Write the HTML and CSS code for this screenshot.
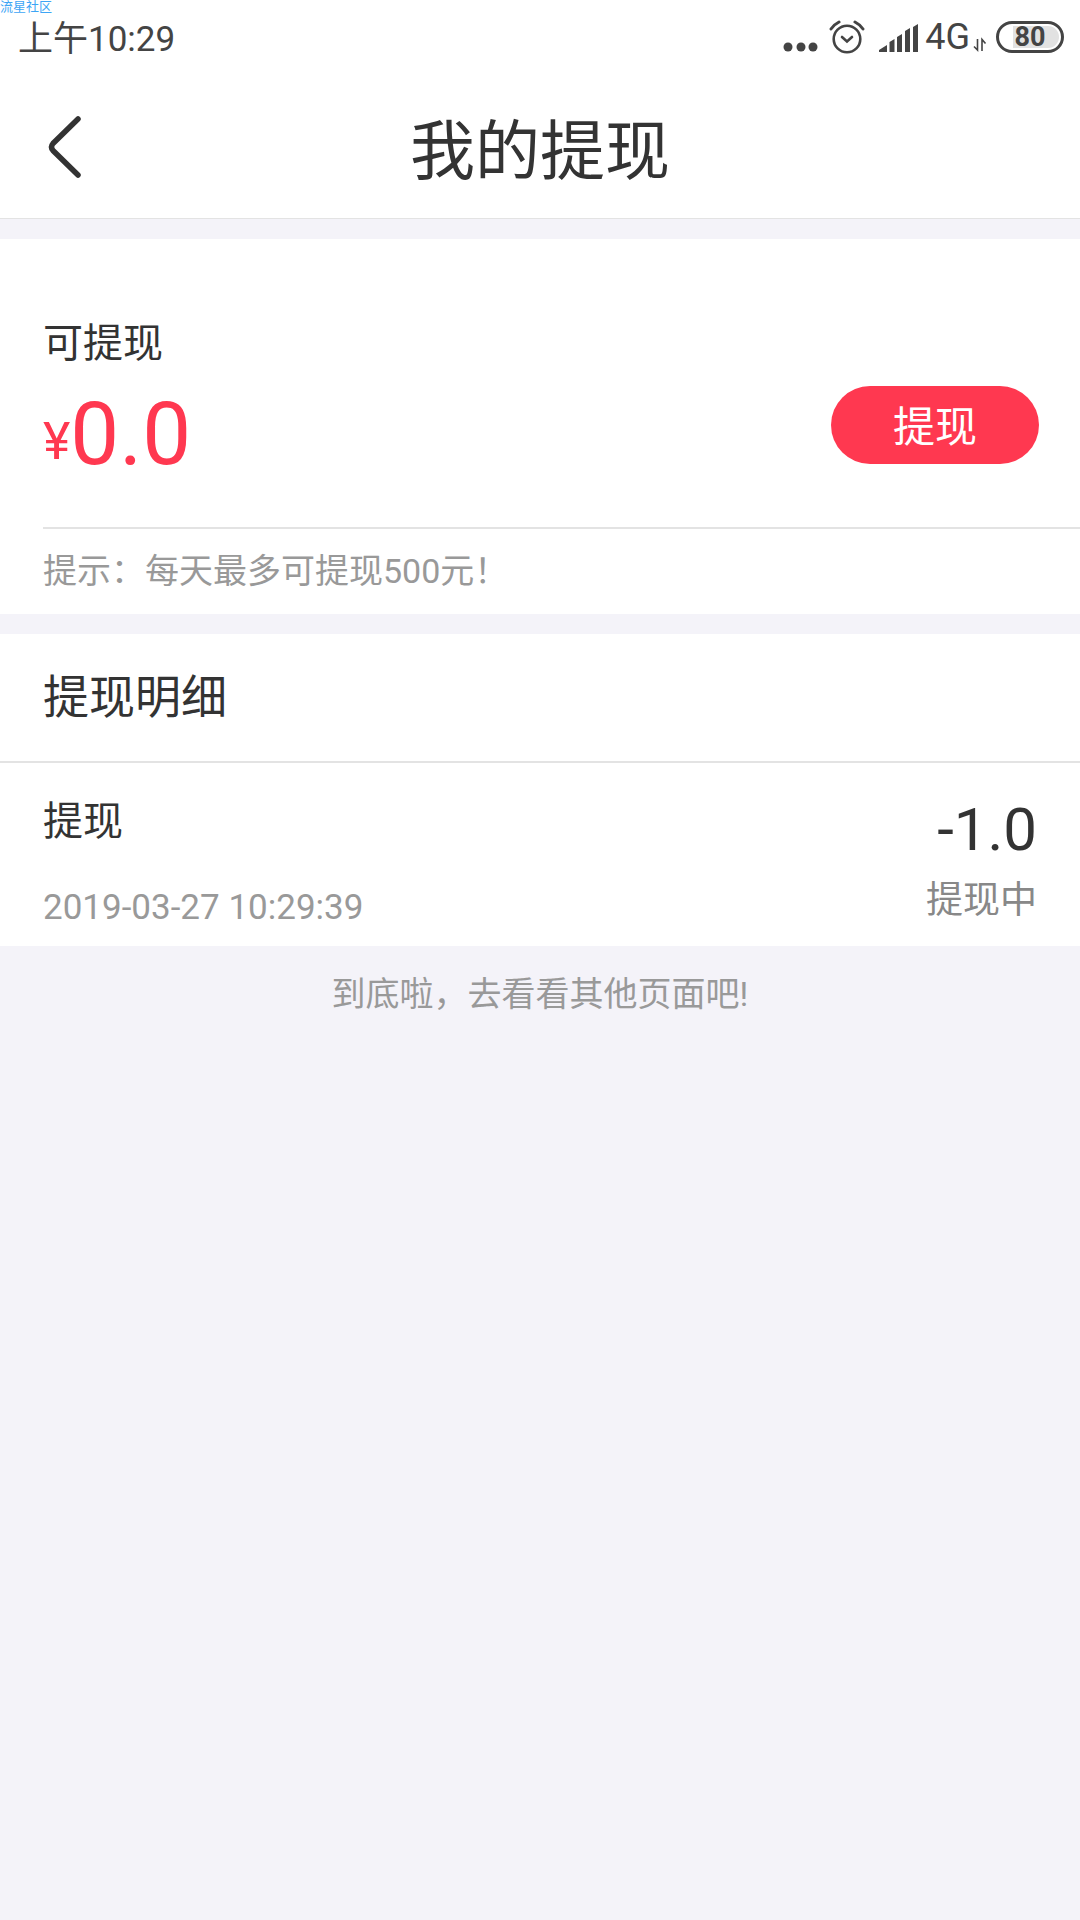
FILE: index.html
```html
<!DOCTYPE html>
<html lang="zh-CN">
<head>
    <meta charset="UTF-8">
    <meta name="viewport" content="width=device-width, initial-scale=1.0">
    <title>我的提现</title>
    <link rel="stylesheet" href="styles.css">
</head>
<body>

    <div class="watermark">流星社区</div>

    <!-- 状态栏 -->
    <div class="status-bar">
        <span class="status-time">上午10:29</span>
        <div class="status-icons">
            <svg class="icon-more" width="36" height="34" viewBox="0 0 36 34" fill="#444">
                <circle cx="5" cy="27" r="4.5"/>
                <circle cx="18" cy="27" r="4.5"/>
                <circle cx="30" cy="27" r="4.5"/>
            </svg>
            <svg class="icon-alarm" width="36" height="34" viewBox="0 0 36 34" fill="none" stroke="#444" stroke-width="2.6" stroke-linecap="round">
                <circle cx="18" cy="19" r="13.3"/>
                <path d="M13 17l5 4.5 5-4.5"/>
                <path d="M2 9q3-4.5 8-7M34 9q-3-4.5-8-7" stroke-width="3"/>
            </svg>
            <svg class="icon-signal" width="40" height="34" viewBox="0 0 40 34" fill="#444">
                <path d="M0 32v-2l8-5v7zM10.500 32V22l5-3v13zM18 32V17l5-3v18zM26 32V11l5-3v24zM34 32V7l5-3v28z"/>
            </svg>
            <span class="status-net">4G</span>
            <svg class="icon-data" width="14" height="34" viewBox="0 0 14 34" fill="none" stroke="#444" stroke-width="1.6">
                <path d="M4.500 19v11L1 26.500M9 31V19.500l3.500 4"/>
            </svg>
            <div class="battery"><span class="battery-level">80</span></div>
        </div>
    </div>

    <!-- 标题栏 -->
    <header class="header">
        <button class="back" type="button" aria-label="返回">
            <svg width="34" height="64" viewBox="0 0 34 64" fill="none" stroke="#333" stroke-width="5.5" stroke-linecap="round">
                <path d="M30 4L5 28.500Q2 32 5 35.500L30 60"/>
            </svg>
        </button>
        <h1 class="title">我的提现</h1>
    </header>

    <main>
        <!-- 余额 -->
        <section class="card">
            <div class="balance">
                <div class="balance-label">可提现</div>
                <div class="balance-row">
                    <div class="amount"><span class="currency">¥</span><span class="number">0.0</span></div>
                    <button class="withdraw" type="button">提现</button>
                </div>
            </div>
            <p class="hint">提示：每天最多可提现500元！</p>
        </section>

        <!-- 明细 -->
        <section class="card">
            <h2 class="card-title">提现明细</h2>
            <div class="record">
                <div class="record-info">
                    <span class="record-name">提现</span>
                    <time class="record-time" datetime="2019-03-27T10:29:39">2019-03-27 10:29:39</time>
                </div>
                <div class="record-result">
                    <span class="record-amount">-1.0</span>
                    <span class="record-state">提现中</span>
                </div>
            </div>
        </section>

        <p class="end">到底啦，去看看其他页面吧!</p>
    </main>

</body>
</html>
```
FILE: styles.css
```css
* {
    box-sizing: border-box;
}

body {
    margin: 0;
    min-height: 100vh;
    background-color: #f4f3f9;
    color: #333;
    font-family: Roboto, "Noto Sans CJK SC", sans-serif;
}

h1, h2, p {
    margin: 0;
    font-weight: normal;
}

button {
    border: none;
    padding: 0;
    font-family: inherit;
    cursor: pointer;
}

svg {
    display: block;
    flex: none;
}

/* 左上角水印 */
.watermark {
    position: absolute;
    top: 0;
    left: 0;
    font-size: 13px;
    line-height: 13px;
    color: #3da5f5;
}

/* 状态栏 */
.status-bar {
    display: flex;
    justify-content: space-between;
    align-items: flex-start;
    height: 76px;
    padding: 0 16px 0 18px;
    background-color: #fff;
    color: #444;
}

.status-time {
    font-size: 35px;
    line-height: 80px;
}

.status-icons {
    display: flex;
    align-items: center;
    height: 34px;
    margin-top: 20px;
}

.icon-alarm {
    margin-left: 10px;
}

.icon-signal {
    margin-left: 14px;
}

.status-net {
    margin-left: 6px;
    font-size: 36px;
    line-height: 34px;
}

.icon-data {
    margin: 0 9px 0 3px;
}

/* 电池 */
.battery {
    display: flex;
    width: 68px;
    height: 32px;
    padding: 2px;
    border: 3px solid #444;
    border-radius: 16px;
}

.battery-level {
    flex: 1;
    border-radius: 11px;
    background: linear-gradient(to right, #fff 20%, #e2e2e2 20%);
    font-size: 27px;
    font-weight: bold;
    line-height: 22px;
    text-align: center;
}

/* 标题栏 */
.header {
    display: grid;
    grid-template-columns: 120px 1fr 120px;
    align-items: center;
    height: 143px;
    border-bottom: 1px solid #e3e3e3;
    background-color: #fff;
}

.back {
    padding-left: 48px;
    background: none;
}

.title {
    padding-top: 10px;
    font-size: 65px;
    line-height: 96px;
    text-align: center;
}

/* 白色区块 */
.card {
    margin-top: 20px;
    background-color: #fff;
}

.balance {
    margin-left: 43px;
    padding: 75px 41px 43px 0;
    border-bottom: 2px solid #e3e3e3;
}

.balance-label {
    font-size: 40px;
    line-height: 60px;
}

.balance-row {
    display: flex;
    justify-content: space-between;
    align-items: flex-start;
    margin-top: 10px;
}

.amount {
    display: flex;
    align-items: flex-end;
    color: #ff3850;
}

.currency {
    font-size: 52px;
    line-height: 84px;
}

.number {
    font-size: 87px;
    line-height: 100px;
}

.withdraw {
    width: 208px;
    height: 78px;
    margin-top: 2px;
    padding-bottom: 4px;
    border-radius: 39px;
    background-color: #ff3850;
    color: #fff;
    font-size: 42px;
}

.hint {
    padding: 0 43px;
    color: #999;
    font-size: 34px;
    line-height: 85px;
}

/* 明细列表 */
.card-title {
    padding: 0 43px;
    border-bottom: 2px solid #e3e3e3;
    font-size: 46px;
    line-height: 127px;
}

.record {
    display: flex;
    justify-content: space-between;
    padding: 29px 43px 8px;
}

.record-info,
.record-result {
    display: flex;
    flex-direction: column;
}

.record-result {
    align-items: flex-end;
}

.record-name {
    font-size: 40px;
    line-height: 60px;
}

.record-time {
    margin-top: 26px;
    color: #999;
    font-size: 35px;
    line-height: 60px;
}

.record-amount {
    font-size: 60px;
    line-height: 76px;
}

.record-state {
    color: #888;
    font-size: 37px;
    line-height: 66px;
}

.end {
    color: #999;
    font-size: 34px;
    line-height: 96px;
    text-align: center;
}
```
